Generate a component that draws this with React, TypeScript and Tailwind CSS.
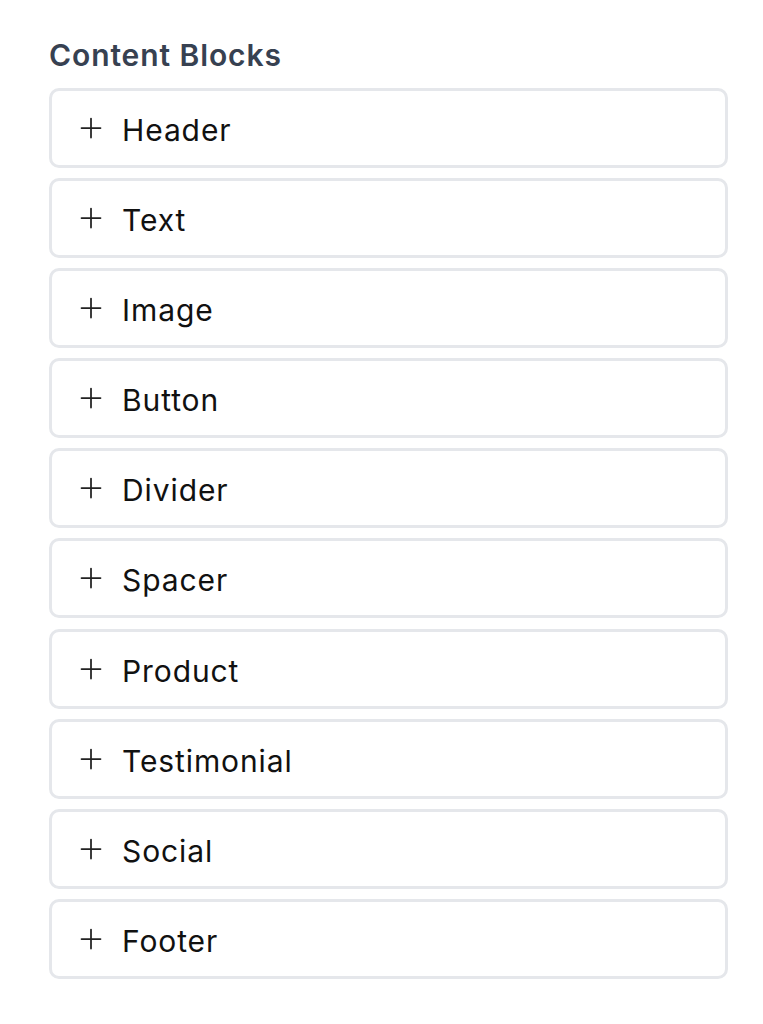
import React from "react";

const items = ["Header", "Text", "Image", "Button", "Divider", "Spacer", "Product", "Testimonial", "Social", "Footer"];

function PlusIcon() {
  return (
    <svg width="22" height="22" viewBox="0 0 22 22" fill="none" stroke="#222222" strokeWidth="1.75" strokeLinecap="round">
      <path d="M11 1.5v19M1.5 11h19" />
    </svg>
  );
}

export default function App() {
  return (
    <div className="min-h-[1024px] bg-white pl-[49px] pt-[36px]" style={{ fontFamily: "Inter, 'Noto Sans', sans-serif" }}>
      <h2 className="text-[30px] font-semibold leading-[38px] tracking-[0.9px] text-[#374151] mb-[14px]">Content Blocks</h2>
      <div className="flex flex-col gap-[10.1px] w-[679px]">
        {items.map((it) => (
          <div key={it} className="h-[80px] rounded-[10px] border-[3px] border-[#e5e7eb] bg-white flex items-center pl-[28px]">
            <PlusIcon />
            <span className="ml-[20px] mt-[4px] text-[30px] tracking-[0.9px] text-[#111111] leading-none">{it}</span>
          </div>
        ))}
      </div>
    </div>
  );
}
